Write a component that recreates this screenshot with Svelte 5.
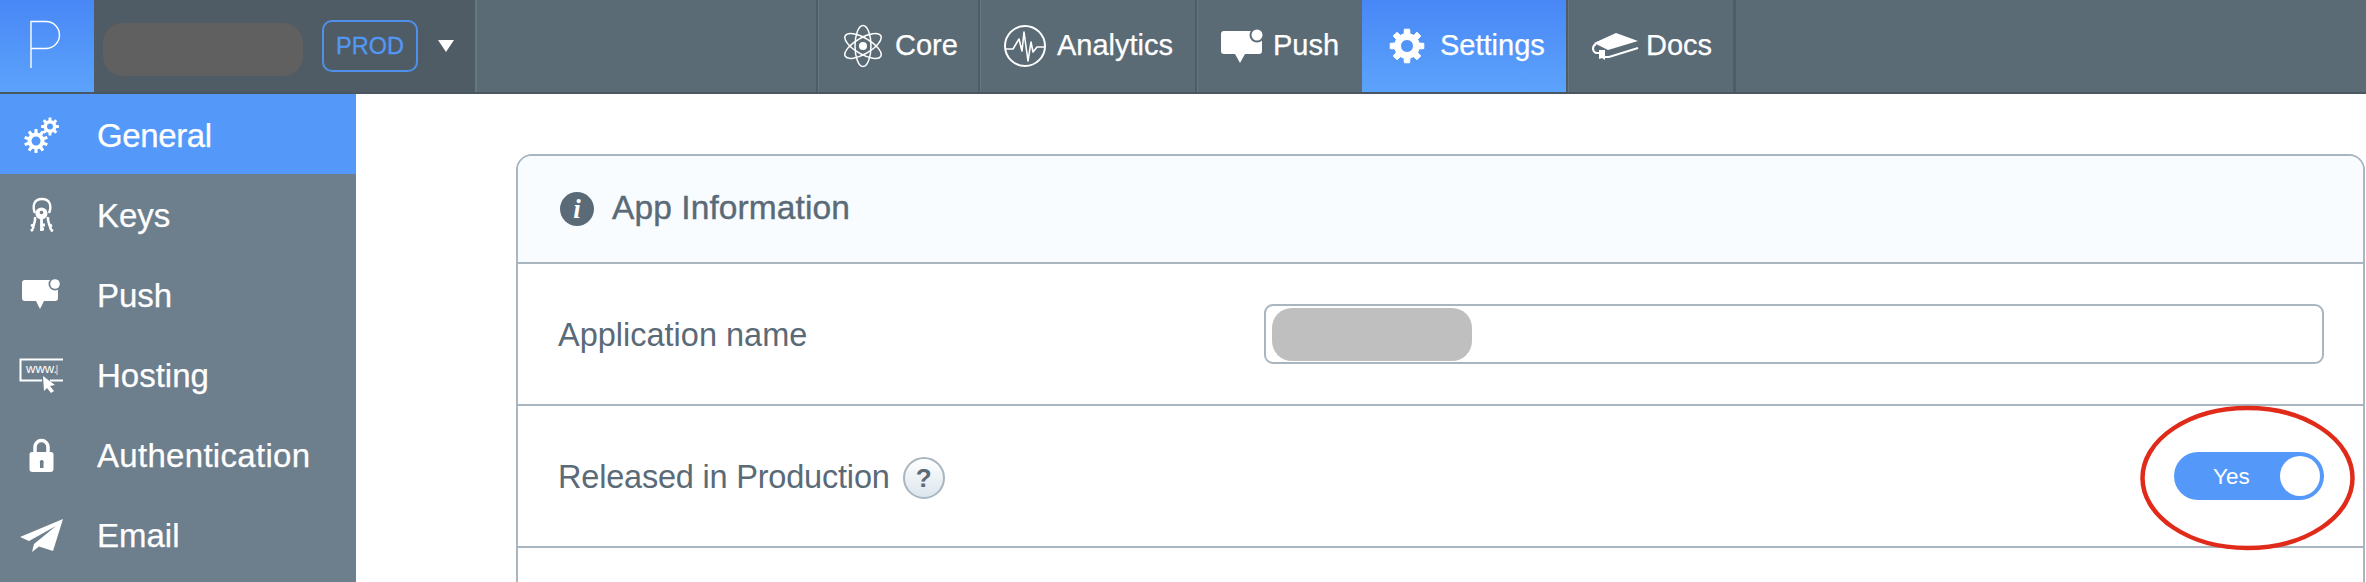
<script>
  function gear(cx, cy, R, r, hole, n) {
    const pts = [];
    const step = (Math.PI * 2) / n;
    for (let i = 0; i < n; i++) {
      const a = i * step - Math.PI / 2;
      const w = step * 0.2;
      const v = step * 0.3;
      pts.push([a - v, r], [a - w, R], [a + w, R], [a + v, r]);
    }
    const d = pts
      .map(([a, q], i) => `${i ? 'L' : 'M'}${(cx + q * Math.cos(a)).toFixed(2)} ${(cy + q * Math.sin(a)).toFixed(2)}`)
      .join('');
    const c = `M${cx - hole} ${cy}a${hole} ${hole} 0 1 0 ${hole * 2} 0a${hole} ${hole} 0 1 0 ${-hole * 2} 0Z`;
    return d + 'Z' + c;
  }
</script>

<div class="page">
  <header class="top">
    <div class="logo">
      <svg width="94" height="92" viewBox="0 0 94 92"><path d="M31 68V21.5H46a13.3 13.3 0 0 1 0 27H31" fill="none" stroke="#fff" stroke-width="1.4" /></svg>
    </div>
    <div class="app-select">
      <div class="redact-dark"></div>
      <div class="badge">PROD</div>
      <svg class="caret" width="16" height="12" viewBox="0 0 16 12"><path d="M0 0H16L8 12Z" fill="#fff" /></svg>
    </div>
    <nav class="nav">
      <a class="item core">
        <svg width="40" height="44" viewBox="842 25 40 44">
          <g fill="none" stroke="#fff" stroke-width="1.5">
            <ellipse cx="862" cy="47" rx="8" ry="20.5" />
            <ellipse cx="862" cy="47" rx="8" ry="20.5" transform="rotate(60 862 47)" />
            <ellipse cx="862" cy="47" rx="8" ry="20.5" transform="rotate(-60 862 47)" />
          </g>
          <circle cx="862" cy="47" r="4" fill="#fff" />
        </svg>
        <span>Core</span>
      </a>
      <a class="item analytics">
        <svg width="44" height="44" viewBox="1003 25 44 44">
          <circle cx="1025" cy="47" r="20" fill="none" stroke="#fff" stroke-width="2" />
          <path d="M1005 50H1013L1019 40L1022 52L1024 33L1028 62L1031 43L1033 53L1037 48H1045" fill="none" stroke="#fff" stroke-width="1.6" stroke-linejoin="round" />
        </svg>
        <span>Analytics</span>
      </a>
      <a class="item push">
        <svg width="44" height="36" viewBox="1220 27 44 36">
          <path d="M1224 30H1262V50a3 3 0 0 1-3 3H1245L1240 62L1235 53H1224a3 3 0 0 1-3-3V33a3 3 0 0 1 3-3Z" fill="#fff" />
          <circle cx="1257" cy="34" r="7.5" fill="#5b6b76" />
          <circle cx="1257" cy="34" r="5.5" fill="#fff" />
        </svg>
        <span>Push</span>
      </a>
      <a class="item settings">
        <svg width="36" height="36" viewBox="1389 29 36 36">
          <path d={gear(1407, 47, 17, 12.5, 6.5, 8)} fill="#fff" fill-rule="evenodd" stroke="#fff" stroke-width="1" stroke-linejoin="round" />
        </svg>
        <span>Settings</span>
      </a>
      <a class="item docs">
        <svg width="48" height="30" viewBox="1591 31 48 30">
          <path d="M1615 33L1637 41L1607 50L1593 43Z" fill="#fff" />
          <path d="M1595 44C1591 46 1591 51 1595 53H1598M1604 57H1608L1637 48" fill="none" stroke="#fff" stroke-width="2" />
          <path d="M1598 50L1604 50V60L1601 58L1598 59Z" fill="#fff" />
        </svg>
        <span>Docs</span>
      </a>
    </nav>
  </header>

  <div class="body">
    <aside class="side">
      <a class="row active">
        <svg class="ico" width="97" height="80" viewBox="0 94 97 80">
          <path d={gear(36, 141, 12, 8.5, 4.5, 10)} fill="#fff" fill-rule="evenodd" />
          <path d={gear(50, 126.5, 9, 6.5, 3, 8)} fill="#fff" fill-rule="evenodd" />
        </svg>
        <span class="tight">General</span>
      </a>
      <a class="row">
        <svg class="ico" width="97" height="80" viewBox="0 174 97 80">
          <path d="M35 213C32 206 34 199 42 199C50 199 52 206 49 213" fill="none" stroke="#fff" stroke-width="2.4" />
          <circle cx="41.5" cy="213.5" r="6" fill="#fff" />
          <circle cx="41.500" cy="212.500" r="1.800" fill="#6d7e8c" />
          <path d="M41.500 217V231M41.500 225H45M41.500 229H44" fill="none" stroke="#fff" stroke-width="2.800" />
          <path d="M35 217C36 222 33 224 33 229M33 225L31 226M33 229L31 231M48 217C47 222 50 224 51 230M50 226L52 225M51 230L53 231" fill="none" stroke="#fff" stroke-width="2.600" />
        </svg>
        <span>Keys</span>
      </a>
      <a class="row">
        <svg class="ico" width="97" height="80" viewBox="0 254 97 80">
          <path d="M25 280H58V298a3 3 0 0 1-3 3H44L40 309L36 301H25a3 3 0 0 1-3-3V283a3 3 0 0 1 3-3Z" fill="#fff" />
          <circle cx="55" cy="284" r="6.5" fill="#6d7e8c" />
          <circle cx="55" cy="284" r="4.8" fill="#fff" />
        </svg>
        <span>Push</span>
      </a>
      <a class="row">
        <svg class="ico" width="97" height="80" viewBox="0 334 97 80">
          <path d="M63 359.500H20.500V380.500H42M50 380.500H63" fill="none" stroke="#fff" stroke-width="2" />
          <text class="www" x="26" y="373">www.</text>
          <path d="M57 365V375" stroke="#fff" stroke-width="0.8" />
          <path d="M43 376L55 385L50 386L54 391L51 393L47 388L44 391Z" fill="#fff" />
        </svg>
        <span>Hosting</span>
      </a>
      <a class="row">
        <svg class="ico" width="97" height="80" viewBox="0 414 97 80">
          <path d="M35 454V447a6.500 6.500 0 0 1 13 0V454" fill="none" stroke="#fff" stroke-width="3.500" />
          <path d="M32 452H51a2.500 2.500 0 0 1 2.500 2.500V469a3 3 0 0 1-3 3H32.500a3 3 0 0 1-3-3V454.500a2.500 2.500 0 0 1 2.500-2.500Z" fill="#fff" />
          <path d="M40 468V463a2 2 0 1 1 3.500 0V468Z" fill="#6d7e8c" />
        </svg>
        <span class="wide">Authentication</span>
      </a>
      <a class="row">
        <svg class="ico" width="97" height="80" viewBox="0 494 97 80">
          <path d="M63 519L20 537L29 541L56 526L34 544L32 552L39 546.500L53 551Z" fill="#fff" />
        </svg>
        <span>Email</span>
      </a>
    </aside>

    <main class="main">
      <section class="card">
        <div class="card-head">
          <span class="info">i</span>
          <h2>App Information</h2>
        </div>
        <div class="field">
          <span class="label">Application name</span>
          <div class="input"><div class="redact-light"></div></div>
        </div>
        <div class="field">
          <span class="label released">Released in Production</span>
          <span class="help">?</span>
          <div class="toggle-wrap">
            <svg class="ring" width="218" height="149" viewBox="0 0 218 149"><ellipse cx="107.500" cy="73" rx="105" ry="70" fill="none" stroke="#e12b1a" stroke-width="4.500" /></svg>
            <div class="toggle"><span>Yes</span><i></i></div>
          </div>
        </div>
      </section>
    </main>
  </div>
</div>

<style>
  :global(body) {
    margin: 0;
    background: #fff;
  }
  .page {
    width: 2366px;
    height: 582px;
    overflow: hidden;
    font-family: "Liberation Sans", Arial, sans-serif;
  }
  svg {
    display: block;
    flex: none;
  }
  .top {
    display: flex;
    height: 92px;
    background: #5b6b76;
    border-bottom: 2px solid #4a5660;
  }
  .logo {
    width: 94px;
    background: linear-gradient(#4887f6, #5ca3fb);
  }
  .app-select {
    width: 381px;
    display: flex;
    align-items: center;
    padding-left: 9px;
    box-sizing: border-box;
    background: #4f5c66;
  }
  .redact-dark {
    width: 200px;
    height: 53px;
    margin-top: 7px;
    border-radius: 20px;
    background: #606060;
  }
  .badge {
    width: 96px;
    height: 52px;
    margin-left: 19px;
    box-sizing: border-box;
    border: 2px solid #4f90ea;
    border-radius: 10px;
    color: #5298f5;
    font-size: 23.500px;
    line-height: 48px;
    text-align: center;
    -webkit-text-stroke: 0.3px #5298f5;
  }
  .caret {
    margin-left: 20px;
    margin-top: -1px;
  }
  .nav {
    flex: 1;
    display: flex;
    padding-left: 339px;
    border-left: 2px solid #667682;
  }
  .item {
    display: flex;
    align-items: center;
    box-sizing: border-box;
    color: #fff;
    font-size: 29px;
    -webkit-text-stroke: 0.25px #fff;
    border-left: 2px solid #4f5c66;
    box-shadow: inset 1px 0 #677782;
  }
  .item span {
    position: relative;
    top: -1px;
  }
  .core { width: 162px; padding-left: 25px; gap: 12px; }
  .analytics { width: 217px; padding-left: 23px; gap: 10px; }
  .push { width: 167px; padding-left: 23px; gap: 9px; }
  .settings {
    width: 204px;
    padding-left: 27px;
    gap: 15px;
    background: linear-gradient(#4887f6, #5ca3fb);
    border-left: 0;
    box-shadow: none;
  }
  .docs {
    width: 170px;
    padding-left: 24px;
    gap: 6px;
    border-right: 3px solid #4f5c66;
  }
  .body {
    display: flex;
    height: 488px;
  }
  .side {
    width: 356px;
    flex: none;
    background: #6d7e8c;
  }
  .row {
    display: flex;
    align-items: center;
    height: 80px;
    color: #fff;
    font-size: 33px;
    -webkit-text-stroke: 0.25px #fff;
  }
  .row span {
    position: relative;
    top: 2px;
  }
  .row .tight {
    letter-spacing: -0.4px;
  }
  .row .wide {
    letter-spacing: 0.3px;
  }
  .row.active {
    background: #5499f9;
  }
  .www {
    fill: #fff;
    font-size: 13px;
    font-family: "Liberation Sans", sans-serif;
    -webkit-text-stroke: 0;
  }
  .main {
    flex: 1;
    min-width: 0;
    padding: 60px 1px 0 160px;
  }
  .card {
    box-sizing: border-box;
    height: 600px;
    border: 2px solid #a9b5bf;
    border-radius: 16px;
    color: #5a6a77;
  }
  .card-head {
    display: flex;
    align-items: center;
    height: 106px;
    padding-left: 42px;
    background: #f8fcff;
    border-radius: 14px 14px 0 0;
    border-bottom: 2px solid #a9b5bf;
  }
  .info {
    width: 34px;
    height: 34px;
    border-radius: 50%;
    background: #5a6a77;
    color: #fff;
    font: italic bold 27px/34px "Liberation Serif", serif;
    text-align: center;
  }
  h2 {
    margin: -2px 0 0 18px;
    font-size: 33.500px;
    font-weight: 400;
    letter-spacing: 0.1px;
    -webkit-text-stroke: 0.4px #5a6a77;
  }
  .field {
    display: flex;
    align-items: center;
    height: 138px;
    padding: 2px 0 0 40px;
    border-bottom: 2px solid #a9b5bf;
    font-size: 32.500px;
    position: relative;
  }
  .released {
    letter-spacing: -0.2px;
  }
  .input {
    position: absolute;
    left: 746px;
    top: 40px;
    width: 1060px;
    height: 60px;
    box-sizing: border-box;
    border: 2px solid #a9b5bf;
    border-radius: 9px;
    padding: 2px 6px;
  }
  .redact-light {
    width: 200px;
    height: 53px;
    border-radius: 20px;
    background: #bfbfbf;
  }
  .help {
    width: 42px;
    height: 42px;
    margin: 2px 0 0 13px;
    box-sizing: border-box;
    border: 2px solid #a9b5bf;
    border-radius: 50%;
    background: linear-gradient(#fff, #dce5ed);
    font-size: 26px;
    font-weight: 700;
    line-height: 38px;
    text-align: center;
  }
  .toggle-wrap {
    position: absolute;
    left: 1622px;
    top: -1px;
    width: 218px;
    height: 149px;
  }
  .ring {
    position: absolute;
    inset: 0;
  }
  .toggle {
    position: absolute;
    left: 34px;
    top: 47px;
    width: 150px;
    height: 48px;
    border-radius: 24px;
    background: #5499f9;
    color: #fff;
    font-size: 22.500px;
    line-height: 50px;
  }
  .toggle span {
    position: absolute;
    left: 39px;
    top: 0;
  }
  .toggle i {
    position: absolute;
    right: 4px;
    top: 4px;
    width: 40px;
    height: 40px;
    border-radius: 50%;
    background: #fff;
  }
</style>
